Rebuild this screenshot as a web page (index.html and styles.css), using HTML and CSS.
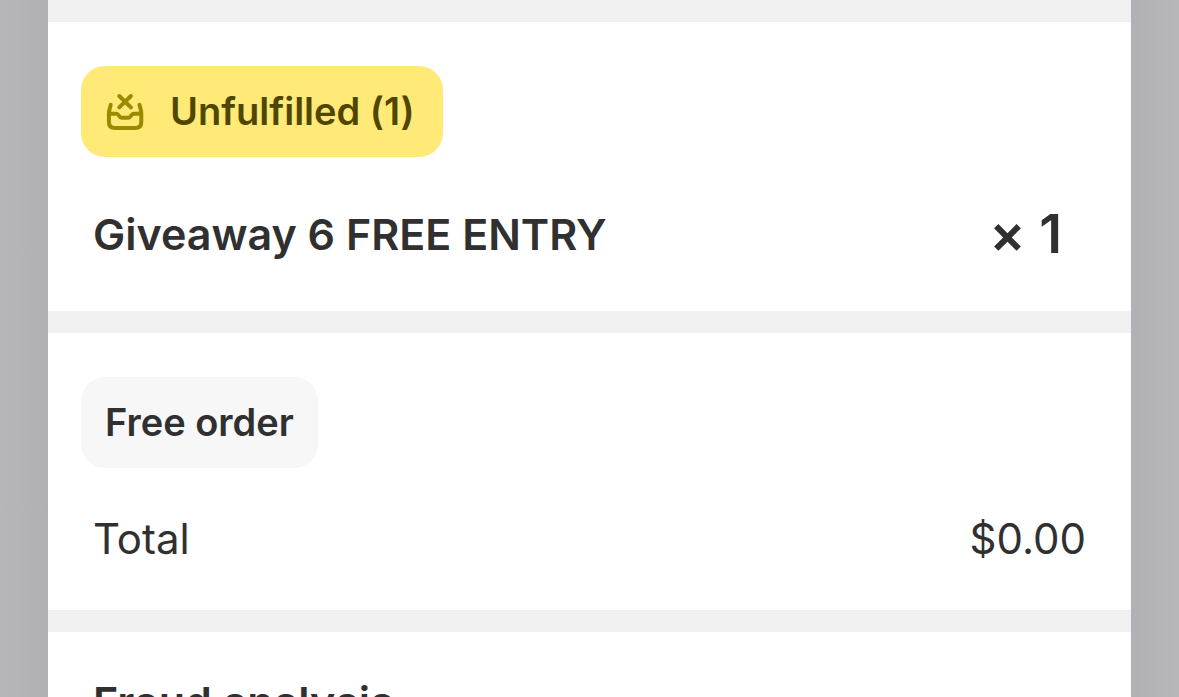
FILE: index.html
```html
<!DOCTYPE html>
<html lang="en">
<head>
    <meta charset="UTF-8">
    <meta name="viewport" content="width=device-width, initial-scale=1.0">
    <title>Order details</title>
    <link rel="stylesheet" href="styles.css">
</head>
<body>
    <main class="order">
        <section class="section">
            <div class="badge badge-warning">
                <svg class="badge-icon" viewBox="-1 -1 40 40" aria-hidden="true">
                    <path d="M4.7 11.7C4.2 15 2.9 16.5 2.9 21v8c0 4 2 6 6 6h20.4c4 0 6-2 6-6v-8c0-4.5-1.3-6-1.8-9.3"/>
                    <path d="M3 20.7h7.500c2.500 0 2.500 4 5 4h7c2.500 0 2.500-4 5-4h7.500"/>
                    <path d="M13.3 3l11.600 11.400M24.900 3L13.300 14.400"/>
                </svg>
                <span>Unfulfilled (1)</span>
            </div>
            <div class="row">
                <h2 class="title">Giveaway 6 FREE ENTRY</h2>
                <span class="quantity">× 1</span>
            </div>
        </section>

        <section class="section">
            <div class="badge">
                <span>Free order</span>
            </div>
            <div class="row row-total">
                <span>Total</span>
                <span>$0.00</span>
            </div>
        </section>

        <section class="section">
            <div class="row row-heading">
                <h2 class="title">Fraud analysis</h2>
            </div>
        </section>
    </main>
</body>
</html>
```
FILE: styles.css
```css
* {
    box-sizing: border-box;
}
body {
    font-family: 'Inter', sans-serif;
    font-size: 42px;
    line-height: 52px;
    color: #303030;
    background: linear-gradient(to right, #b7b6bb, #b0b0b3 48px, #b0b0b5 calc(100% - 48px), #b7b6bb);
    margin: 0;
    height: 100vh;
    overflow: hidden;
}
.order {
    margin: 0 48px;
    background: #fff;
}
.section {
    padding: 44px 33px 35px;
    border-top: 22px solid #f0f0f0;
}
.badge {
    display: inline-flex;
    align-items: center;
    gap: 25px;
    padding: 17px 24px;
    border-radius: 24px;
    background: #f7f7f7;
    font-size: 38px;
    font-weight: 600;
    line-height: 57px;
    vertical-align: top;
}
.badge-warning {
    padding-right: 28px;
    background: #ffea78;
    color: #4f4700;
    font-feature-settings: "calt" 0;
}
.badge-icon {
    width: 40px;
    height: 40px;
    fill: none;
    stroke: #998a00;
    stroke-width: 4;
    stroke-linecap: round;
    stroke-linejoin: round;
}
.row {
    display: flex;
    justify-content: space-between;
    align-items: center;
    margin-top: 35px;
    padding: 0 12px;
    min-height: 84px;
}
.row-total {
    min-height: 72px;
}
.row-heading {
    margin-top: 0;
    min-height: 52px;
}
.title {
    margin: 0;
    font-size: 43px;
    font-weight: 600;
}
.quantity {
    padding-right: 24px;
    font-size: 54px;
    font-weight: 600;
    font-feature-settings: "calt" 0;
}
```
